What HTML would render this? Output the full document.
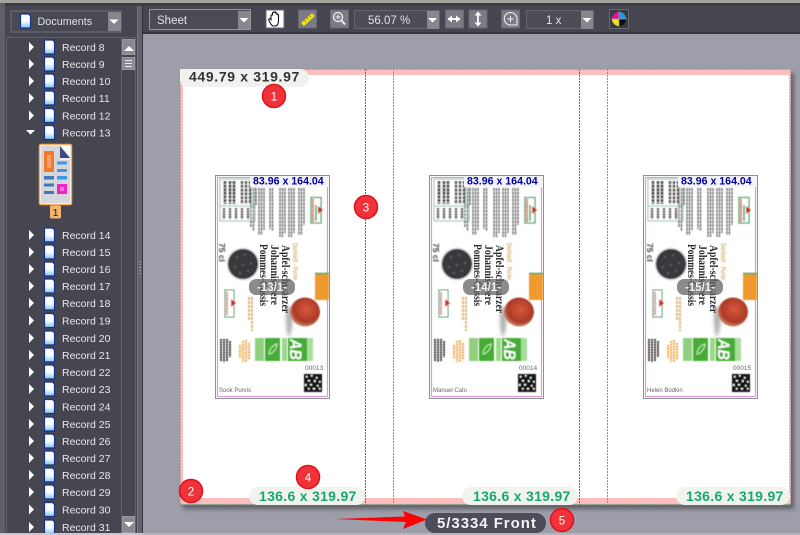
<!DOCTYPE html>
<html><head><meta charset="utf-8"><style>
html,body{margin:0;padding:0;width:800px;height:535px;overflow:hidden;background:#9e9eaa}
svg{display:block}
text{font-family:"Liberation Sans",sans-serif}
.r{font-size:10.5px;fill:#e9e9e9}
.t{font-size:12px;fill:#e2e2e2}
.d{font-size:14px;font-weight:bold;fill:#18a673;letter-spacing:.3px}
.b{font-size:11.5px;fill:#fff}
.bl{font-size:10.6px;font-weight:bold;fill:#00009c}
.p{font-size:11.5px;font-weight:bold;fill:#f2f2f2}
.ti{font-family:"Liberation Serif",serif;font-size:11.5px;font-weight:bold;fill:#2a2a2a}
</style></head><body>
<svg width="800" height="535" viewBox="0 0 800 535" xmlns="http://www.w3.org/2000/svg">
<defs>
<filter id="bl" x="-5%" y="-5%" width="110%" height="110%"><feGaussianBlur stdDeviation=".4"/></filter>
<filter id="bs" x="-5%" y="-5%" width="110%" height="110%"><feGaussianBlur stdDeviation="2"/></filter>
<filter id="bm" x="-40%" y="-40%" width="180%" height="180%"><feGaussianBlur stdDeviation="1.500"/></filter>
<linearGradient id="dg" x1="0" y1="0" x2="0" y2="1"><stop offset="0" stop-color="#fff"/><stop offset=".55" stop-color="#f4fbff"/><stop offset="1" stop-color="#7cc4ea"/></linearGradient>
<radialGradient id="ap" cx=".55" cy=".42" r=".62"><stop offset="0" stop-color="#d8573a"/><stop offset=".7" stop-color="#ab3a28"/><stop offset="1" stop-color="#d8a27e"/></radialGradient>
<symbol id="doc" width="12" height="16" viewBox="0 0 12 16" overflow="visible">
<path d="M1 1H9L11 3V15H1Z" fill="url(#dg)" stroke="#17328f" stroke-width="1.200"/>
</symbol>
<symbol id="tr" width="8" height="10" viewBox="0 0 8 10"><path d="M1 0L6 5L1 10Z" fill="#fff"/></symbol>
<symbol id="dn" width="12" height="8" viewBox="0 0 12 8"><path d="M1 1H10L5.500 5.500Z" fill="#fff"/></symbol>
<symbol id="lab" width="116" height="226" viewBox="0 0 116 226" overflow="visible">
<rect x=".5" y=".5" width="114" height="223" fill="#fff" stroke="#222" stroke-width="1" stroke-dasharray="1 1"/>
<rect x="2.500" y="2.500" width="110" height="219" fill="none" stroke="#d79ad3" stroke-width="1.200"/>
<g filter="url(#bl)">
<rect x="5" y="4" width="35" height="42" fill="#fff" stroke="#8fc4ac" stroke-width="1"/>
<path d="M5 31H40" stroke="#8fc4ac"/>
<g stroke="#444" fill="none">
<path d="M10 6V29M15 6V29M19 6V29" stroke-width="3" stroke-dasharray="3 .6"/>
<path d="M27 6V29M31 6V29M35 6V29" stroke-width="2.500" stroke-dasharray="3 .8"/>
<path d="M9 33V44M15 33V44M21 33V44M27 33V44M33 33V44" stroke-width="2.500" stroke-dasharray="2 .6"/>
</g>
<g stroke="#606060" stroke-width="1.300" fill="none" stroke-dasharray="3 .6">
<path d="M36 13V52M38.500 13V56M41 13V30M44 13V60M46.500 13V60M49 13V55M55 13V54M57.500 13V56M65 13V62M67.500 13V62M70 13V58M74 13V62M76.500 13V62M79 13V58M84 13V60M86.500 13V60M89 13V50"/>
</g>
<text transform="translate(4 68) rotate(90)" style="font-size:8.500px;font-weight:bold" fill="#444">75 cl</text>
<path d="M96 22.500H106V48H96Z" fill="#fff" stroke="#4ea765" stroke-width="1.300"/>
<path d="M98 24V47" stroke="#d85a5a" stroke-width="2" stroke-dasharray="2 .6"/>
<path d="M101 30V46" stroke="#3f9a5d" stroke-width="1.500"/>
<path d="M103 31L108 35L103 39Z" fill="#c8302c"/>
<circle cx="28" cy="89" r="16.500" fill="#dcdcdc"/>
<circle cx="28" cy="89" r="15" fill="#38383c"/>
<g fill="#59595d"><circle cx="22" cy="82" r="1.300"/><circle cx="30" cy="80" r="1.300"/><circle cx="36" cy="88" r="1.300"/><circle cx="20" cy="92" r="1.300"/><circle cx="28" cy="90" r="1.300"/><circle cx="33" cy="96" r="1.300"/><circle cx="25" cy="98" r="1.300"/></g>
<path d="M100 98H114V125H100Z" fill="#ee9a2e"/>
<path d="M100 98.500H114" stroke="#4ea765" stroke-width="1.500"/>
<path d="M72 132C78 126 80 150 74 162C71 160 70 140 72 132Z" fill="#888" opacity=".65" filter="url(#bm)"/>
<ellipse cx="90" cy="137" rx="15" ry="14.500" fill="url(#ap)"/>
<text transform="translate(78 68) rotate(90)" style="font-size:7px;font-weight:bold" fill="#d8b678" textLength="37" lengthAdjust="spacingAndGlyphs">Dunkadt - Purée</text>
<path d="M10 115H19V142H10Z" fill="#fff" stroke="#3f9a5d"/>
<path d="M12 117V140" stroke="#d97a7a" stroke-width="2" stroke-dasharray="2 .6"/>
<path d="M16 124L21 128L16 132Z" fill="#c8302c"/>
<path d="M34 122V146M37 122V156" stroke="#e0b478" stroke-width="2" stroke-dasharray="3 1"/>
<path d="M6 164V186M9 164V187M12 164V186M15 166V182" stroke="#222" stroke-width="1.700" stroke-dasharray="2 .5"/>
<path d="M25 170V183M28 166V187M31 165V187M34 168V185" stroke="#efa54c" stroke-width="2" stroke-dasharray="2 .8"/>
<rect x="40" y="163" width="9" height="23" fill="#8fd07f"/>
<rect x="50" y="163" width="15" height="23" fill="#45ad34"/>
<path d="M54 179C57 179 62 174 62 169C58 170 54 174 54 179Z" fill="none" stroke="#c9ecbe"/>
<rect x="67" y="163" width="5" height="23" fill="#9bd88c"/>
<rect x="73" y="163" width="19" height="23" fill="#45ad34"/>
<text transform="translate(75 164) rotate(90)" style="font-size:17px;font-weight:bold;font-style:italic" fill="#fff" textLength="21" lengthAdjust="spacingAndGlyphs">AB</text>
<rect x="92" y="163" width="6" height="23" fill="#a9dd9c"/>
<rect x="89" y="199" width="18" height="18" fill="#181818"/>
<g fill="#fff"><rect x="91" y="201" width="1.500" height="1.500"/><rect x="96" y="200" width="1.500" height="1.500"/><rect x="101" y="202" width="1.500" height="1.500"/><rect x="93" y="205" width="2" height="1.500"/><rect x="99" y="205" width="1.500" height="2"/><rect x="104" y="206" width="1.500" height="1.500"/><rect x="90" y="209" width="1.500" height="2"/><rect x="95" y="209" width="2" height="1.500"/><rect x="102" y="210" width="1.500" height="1.500"/><rect x="93" y="213" width="1.500" height="1.500"/><rect x="98" y="213" width="2" height="1.500"/><rect x="104" y="213" width="1.500" height="1.500"/></g>
</g>
</symbol>
<symbol id="btn" width="19" height="19" viewBox="0 0 19 19"><rect x=".5" y=".5" width="18" height="18" fill="#7a7b84" stroke="#686973"/></symbol>
</defs>

<!-- frame -->
<rect width="800" height="535" fill="#55565f"/>
<rect width="800" height="3" fill="#a4a49e"/>
<rect y="3" width="800" height="3" fill="#3c3d44"/>
<rect x="0" y="3" width="5" height="532" fill="#5e5f67"/>
<rect x="5" y="6" width="132" height="529" fill="#45464f"/>
<rect x="137" y="6" width="6" height="529" fill="#61626b"/>
<rect x="137" y="6" width="1" height="529" fill="#77787f"/>
<rect x="142" y="6" width="1" height="529" fill="#33343a"/>
<path d="M140 261v1M140 264v1M140 267v1M140 270v1M140 273v1" stroke="#ccc"/>

<!-- sidebar header -->
<rect x="10" y="10" width="112" height="23" fill="#5a5b64"/>
<rect x="12" y="12" width="96" height="19" fill="#484952"/>
<rect x="108" y="12" width="13" height="19" fill="#85868e"/>
<use href="#dn" x="108.500" y="18.500"/>
<use href="#doc" x="19.500" y="13"/>
<text x="37.500" y="25" class="t" style="font-size:10.800px">Documents</text>
<rect x="6" y="37" width="130" height="1" fill="#5f6069"/>
<rect x="121" y="38" width="1" height="497" fill="#5f6069"/>
<rect x="135" y="38" width="1" height="497" fill="#5f6069"/>
<rect x="6" y="38" width="1" height="497" fill="#5f6069"/>
<rect x="122.500" y="39.500" width="12" height="15" fill="#888992" stroke="#999"/>
<path d="M124 51H134L129 46Z" fill="#fff"/>
<rect x="122.500" y="57.500" width="12" height="12" fill="#888992" stroke="#9a9a9a"/>
<path d="M125 60.500H132M125 63.500H132M125 66.500H132" stroke="#eee"/>
<rect x="122.500" y="516.500" width="12" height="16" fill="#888992" stroke="#999"/>
<path d="M124 522H134L129 527Z" fill="#fff"/>

<!-- tree -->
<g>
<use href="#tr" x="28" y="42"/><use href="#doc" x="43.500" y="39"/><text x="62" y="51" class="r">Record 8</text>
<use href="#tr" x="28" y="59"/><use href="#doc" x="43.500" y="56"/><text x="62" y="68" class="r">Record 9</text>
<use href="#tr" x="28" y="76"/><use href="#doc" x="43.500" y="73"/><text x="62" y="85" class="r">Record 10</text>
<use href="#tr" x="28" y="93"/><use href="#doc" x="43.500" y="90"/><text x="62" y="102" class="r">Record 11</text>
<use href="#tr" x="28" y="110.500"/><use href="#doc" x="43.500" y="107.500"/><text x="62" y="119.500" class="r">Record 12</text>
<path d="M26 130H35L30.500 134.500Z" fill="#fff"/><use href="#doc" x="43.500" y="124.500"/><text x="62" y="136.500" class="r">Record 13</text>
<use href="#tr" x="28" y="230"/><use href="#doc" x="43.500" y="227"/><text x="62" y="239" class="r">Record 14</text>
<use href="#tr" x="28" y="247"/><use href="#doc" x="43.500" y="244"/><text x="62" y="256" class="r">Record 15</text>
<use href="#tr" x="28" y="264"/><use href="#doc" x="43.500" y="261"/><text x="62" y="273" class="r">Record 16</text>
<use href="#tr" x="28" y="281"/><use href="#doc" x="43.500" y="278"/><text x="62" y="290" class="r">Record 17</text>
<use href="#tr" x="28" y="298"/><use href="#doc" x="43.500" y="295"/><text x="62" y="307" class="r">Record 18</text>
<use href="#tr" x="28" y="315.500"/><use href="#doc" x="43.500" y="312.500"/><text x="62" y="324.500" class="r">Record 19</text>
<use href="#tr" x="28" y="333"/><use href="#doc" x="43.500" y="330"/><text x="62" y="342" class="r">Record 20</text>
<use href="#tr" x="28" y="350"/><use href="#doc" x="43.500" y="347"/><text x="62" y="359" class="r">Record 21</text>
<use href="#tr" x="28" y="367"/><use href="#doc" x="43.500" y="364"/><text x="62" y="376" class="r">Record 22</text>
<use href="#tr" x="28" y="384"/><use href="#doc" x="43.500" y="381"/><text x="62" y="393" class="r">Record 23</text>
<use href="#tr" x="28" y="401.500"/><use href="#doc" x="43.500" y="398.500"/><text x="62" y="410.500" class="r">Record 24</text>
<use href="#tr" x="28" y="419"/><use href="#doc" x="43.500" y="416"/><text x="62" y="428" class="r">Record 25</text>
<use href="#tr" x="28" y="436"/><use href="#doc" x="43.500" y="433"/><text x="62" y="445" class="r">Record 26</text>
<use href="#tr" x="28" y="453"/><use href="#doc" x="43.500" y="450"/><text x="62" y="462" class="r">Record 27</text>
<use href="#tr" x="28" y="470"/><use href="#doc" x="43.500" y="467"/><text x="62" y="479" class="r">Record 28</text>
<use href="#tr" x="28" y="487"/><use href="#doc" x="43.500" y="484"/><text x="62" y="496" class="r">Record 29</text>
<use href="#tr" x="28" y="504.500"/><use href="#doc" x="43.500" y="501.500"/><text x="62" y="513.500" class="r">Record 30</text>
<use href="#tr" x="28" y="522"/><use href="#doc" x="43.500" y="519"/><text x="62" y="531" class="r">Record 31</text>
</g>

<!-- thumbnail -->
<rect x="39.500" y="144.500" width="32" height="60" rx="1.500" fill="#fff" stroke="#f3ae66" stroke-width="1.500"/>
<path d="M41 146H60L70 156V203H41Z" fill="#eef0f5"/>
<path d="M41 146H60V160H70V203H41Z" fill="#c6c7cc" opacity=".6"/>
<path d="M60 146L70 158H60Z" fill="#3c4a80"/>
<rect x="44" y="151" width="10" height="21" fill="#ef7a27"/>
<rect x="47" y="155" width="4" height="13" fill="#fba06c"/>
<rect x="57" y="161.500" width="10" height="3" fill="#3d97ea"/><rect x="57" y="169" width="10" height="3" fill="#3d97ea"/><rect x="57" y="176" width="10" height="3.500" fill="#3d97ea"/>
<rect x="44" y="176" width="10" height="3.500" fill="#3e78b8"/><rect x="44" y="183.500" width="10" height="3" fill="#3e78b8"/><rect x="44" y="191" width="10" height="3" fill="#3e78b8"/>
<rect x="57" y="184" width="10" height="10" fill="#ee24c8"/><rect x="60" y="187" width="4" height="4" fill="#fa78e2"/>
<rect x="50" y="205.500" width="11" height="13" rx="1.500" fill="#f3b46e"/>
<text x="55.500" y="216" text-anchor="middle" style="font-size:10.500px" fill="#222">1</text>

<!-- toolbar -->
<rect x="143" y="6" width="657" height="26" fill="#45464f"/>
<rect x="143" y="32" width="657" height="2" fill="#35363c"/>
<rect x="149.500" y="9.500" width="101" height="20" fill="#4a4b54" stroke="#e2e2e2" stroke-dasharray="1 1"/>
<text x="157" y="24" class="t" style="font-size:11.500px">Sheet</text>
<rect x="238" y="11" width="12" height="18" fill="#85868e"/><use href="#dn" x="238.500" y="17"/>
<rect x="266" y="10" width="18" height="18" fill="#fff" stroke="#6a6b74"/>
<path d="M271 19V15.500C271 14.500 272.500 14.500 272.500 15.500V13C272.500 12 274 12 274 13V12.500C274 11.500 275.500 11.500 275.500 12.500V13.500C275.500 12.500 277 12.500 277 13.500V15C277 14.200 278.500 14.200 278.500 15.200V21C278.500 24 277 26 275 26H273.500C272 26 271 24.500 270 22.500L268.800 20C268.300 18.800 270 18 271 19.500Z" fill="#fff" stroke="#111" stroke-width="1.100"/>
<use href="#btn" x="298" y="9.500"/>
<path d="M301 23L312 13L315 16L304 26Z" fill="#f0e20a"/>
<path d="M304.500 20L306 21.500M307 17.700L308.500 19.200M309.500 15.500L311 17" stroke="#77731a" stroke-width=".8"/>
<use href="#btn" x="330" y="9.500"/>
<circle cx="338" cy="17" r="4.500" fill="none" stroke="#eee" stroke-width="1.300"/><path d="M341.500 20.500L345 24.500" stroke="#eee" stroke-width="2"/><path d="M335.500 17H340.500M338 14.500V19.500" stroke="#eee"/>
<rect x="354.500" y="10.500" width="85" height="18" fill="#4c4d56" stroke="#63646d"/>
<text x="368" y="24" class="t" style="font-size:11.500px">56.07 %</text>
<rect x="427" y="11" width="12" height="18" fill="#85868e"/><use href="#dn" x="427" y="17"/>
<use href="#btn" x="445" y="9.500"/>
<path d="M448 19H460" stroke="#fff" stroke-width="1.800"/><path d="M452 15.500L447.500 19L452 22.500ZM456 15.500L460.500 19L456 22.500Z" fill="#fff"/>
<use href="#btn" x="468.500" y="9.500"/>
<path d="M478 13V25" stroke="#fff" stroke-width="1.800"/><path d="M474.500 15.500L478 11.500L481.500 15.500ZM474.500 22.500L478 26.500L481.500 22.500Z" fill="#fff"/>
<use href="#btn" x="501" y="9.500"/>
<path d="M510.500 12.500A6 6 0 1 0 510.500 25H517V19A6.500 6.500 0 0 0 510.500 12.500Z" fill="none" stroke="#eee" stroke-width="1.100"/><path d="M507.500 19H513.500M510.500 16V22" stroke="#eee"/>
<rect x="526.500" y="10.500" width="67" height="18" fill="#4c4d56" stroke="#63646d"/>
<text x="546" y="24" class="t" style="font-size:11.500px">1 x</text>
<rect x="581" y="11" width="12" height="18" fill="#85868e"/><use href="#dn" x="581.500" y="17"/>
<rect x="609.500" y="9.500" width="19" height="19" fill="#3a3b42" stroke="#686973"/>
<path d="M619 19V12A7 7 0 0 0 612 19Z" fill="#e0109a"/><path d="M619 19V12A7 7 0 0 1 626 19Z" fill="#1a9fe0"/><path d="M619 19V26A7 7 0 0 1 612 19Z" fill="#f2e010"/><path d="M619 19V26A7 7 0 0 0 626 19Z" fill="#0c0c0c"/>
<path d="M619 11V27M611 19H627" stroke="#999" stroke-width=".7"/>

<!-- canvas -->
<rect x="143" y="34" width="657" height="499" fill="#9e9eaa"/>
<rect y="533" width="800" height="2" fill="#c8c8cc"/>
<rect x="143" y="533" width="657" height="2" fill="#b5b5bb"/>

<!-- sheet -->
<rect x="183" y="73" width="611" height="436" fill="#55565c" opacity=".85" filter="url(#bs)"/>
<rect x="180" y="69" width="611" height="436" fill="#fdbdbd"/>
<rect x="183" y="75" width="606" height="423" fill="#fff"/>
<rect x="180.500" y="69.500" width="610" height="435" fill="none" stroke="#777" stroke-width="1" stroke-dasharray="1 2"/>
<path d="M180 505H791" stroke="#2a9b7a" stroke-dasharray="2 1"/>
<path d="M365.500 69V505M579.500 69V505" stroke="#1f9088" stroke-dasharray="2 1" fill="none"/>
<path d="M393.500 69V505M607.500 69V505" stroke="#3fbba5" stroke-dasharray="2 1" fill="none"/>

<!-- labels -->
<use href="#lab" x="215" y="175"/>
<use href="#lab" x="429" y="175"/>
<use href="#lab" x="643" y="175"/>

<g>
<rect x="250" y="176" width="78" height="11" fill="#f4f4f8"/>
<text x="253" y="184.500" class="bl">83.96 x 164.04</text>
<text transform="translate(282 245) rotate(90)" class="ti" textLength="68" lengthAdjust="spacingAndGlyphs">Apfel-schwarzer</text>
<text transform="translate(271 245) rotate(90)" class="ti" textLength="60" lengthAdjust="spacingAndGlyphs">Johannisbeere</text>
<text transform="translate(260 244) rotate(90)" class="ti" textLength="62" lengthAdjust="spacingAndGlyphs">Pommes-Cassis</text>
<rect x="249" y="279" width="46" height="16" rx="7" fill="#5e5e62" opacity=".72"/>
<text x="272" y="291" text-anchor="middle" class="p">-13/1-</text>
<text x="305" y="370" style="font-size:6.500px" fill="#666">00013</text>
<text x="219" y="392" style="font-size:6px" fill="#666">Sook Purvis</text>
</g>
<g>
<rect x="464" y="176" width="78" height="11" fill="#f4f4f8"/>
<text x="467" y="184.500" class="bl">83.96 x 164.04</text>
<text transform="translate(496 245) rotate(90)" class="ti" textLength="68" lengthAdjust="spacingAndGlyphs">Apfel-schwarzer</text>
<text transform="translate(485 245) rotate(90)" class="ti" textLength="60" lengthAdjust="spacingAndGlyphs">Johannisbeere</text>
<text transform="translate(474 244) rotate(90)" class="ti" textLength="62" lengthAdjust="spacingAndGlyphs">Pommes-Cassis</text>
<rect x="463" y="279" width="46" height="16" rx="7" fill="#5e5e62" opacity=".72"/>
<text x="486" y="291" text-anchor="middle" class="p">-14/1-</text>
<text x="519" y="370" style="font-size:6.500px" fill="#666">00014</text>
<text x="433" y="392" style="font-size:6px" fill="#666">Manuel Cato</text>
</g>
<g>
<rect x="678" y="176" width="78" height="11" fill="#f4f4f8"/>
<text x="681" y="184.500" class="bl">83.96 x 164.04</text>
<text transform="translate(710 245) rotate(90)" class="ti" textLength="68" lengthAdjust="spacingAndGlyphs">Apfel-schwarzer</text>
<text transform="translate(699 245) rotate(90)" class="ti" textLength="60" lengthAdjust="spacingAndGlyphs">Johannisbeere</text>
<text transform="translate(688 244) rotate(90)" class="ti" textLength="62" lengthAdjust="spacingAndGlyphs">Pommes-Cassis</text>
<rect x="677" y="279" width="46" height="16" rx="7" fill="#5e5e62" opacity=".72"/>
<text x="700" y="291" text-anchor="middle" class="p">-15/1-</text>
<text x="733" y="370" style="font-size:6.500px" fill="#666">00015</text>
<text x="647" y="392" style="font-size:6px" fill="#666">Helen Bodkin</text>
</g>

<!-- dimension pills -->
<path d="M180 69H300A9 9 0 0 1 300 87H188Q180 87 180 80Z" fill="#f1f1ef"/>
<text x="189" y="81.500" style="font-size:14px;font-weight:bold;letter-spacing:.65px" fill="#333">449.79 x 319.97</text>
<rect x="249" y="487" width="116" height="18" rx="9" fill="#f1f3ef"/>
<text x="259" y="501" class="d">136.6 x 319.97</text>
<rect x="462" y="487" width="116" height="18" rx="9" fill="#f1f3ef"/>
<text x="473" y="501" class="d">136.6 x 319.97</text>
<rect x="676" y="487" width="114" height="18" rx="9" fill="#f1f3ef"/>
<text x="686" y="501" class="d">136.6 x 319.97</text>

<!-- arrow & page pill -->
<path d="M335 519L405 516.500L403 511L427 519.500L403 529L406 522Z" fill="#f00"/>
<rect x="425" y="513" width="121" height="20" rx="10" fill="#4c4d58"/>
<text x="437" y="528" style="font-size:15px;font-weight:bold;letter-spacing:.95px" fill="#f4f4f4">5/3334 Front</text>

<!-- badges -->
<g fill="#f0333a" stroke="#e01018" stroke-width="1.500">
<circle cx="274" cy="96" r="11.500"/><circle cx="191" cy="491" r="11.500"/><circle cx="366" cy="207" r="11.500"/><circle cx="308" cy="477" r="11.500"/><circle cx="562" cy="520" r="11.500"/>
</g>
<text x="274" y="100.500" text-anchor="middle" class="b">1</text>
<text x="191" y="495.500" text-anchor="middle" class="b">2</text>
<text x="366" y="211.500" text-anchor="middle" class="b">3</text>
<text x="308" y="481.500" text-anchor="middle" class="b">4</text>
<text x="562" y="524.500" text-anchor="middle" class="b">5</text>
</svg>
</body></html>
